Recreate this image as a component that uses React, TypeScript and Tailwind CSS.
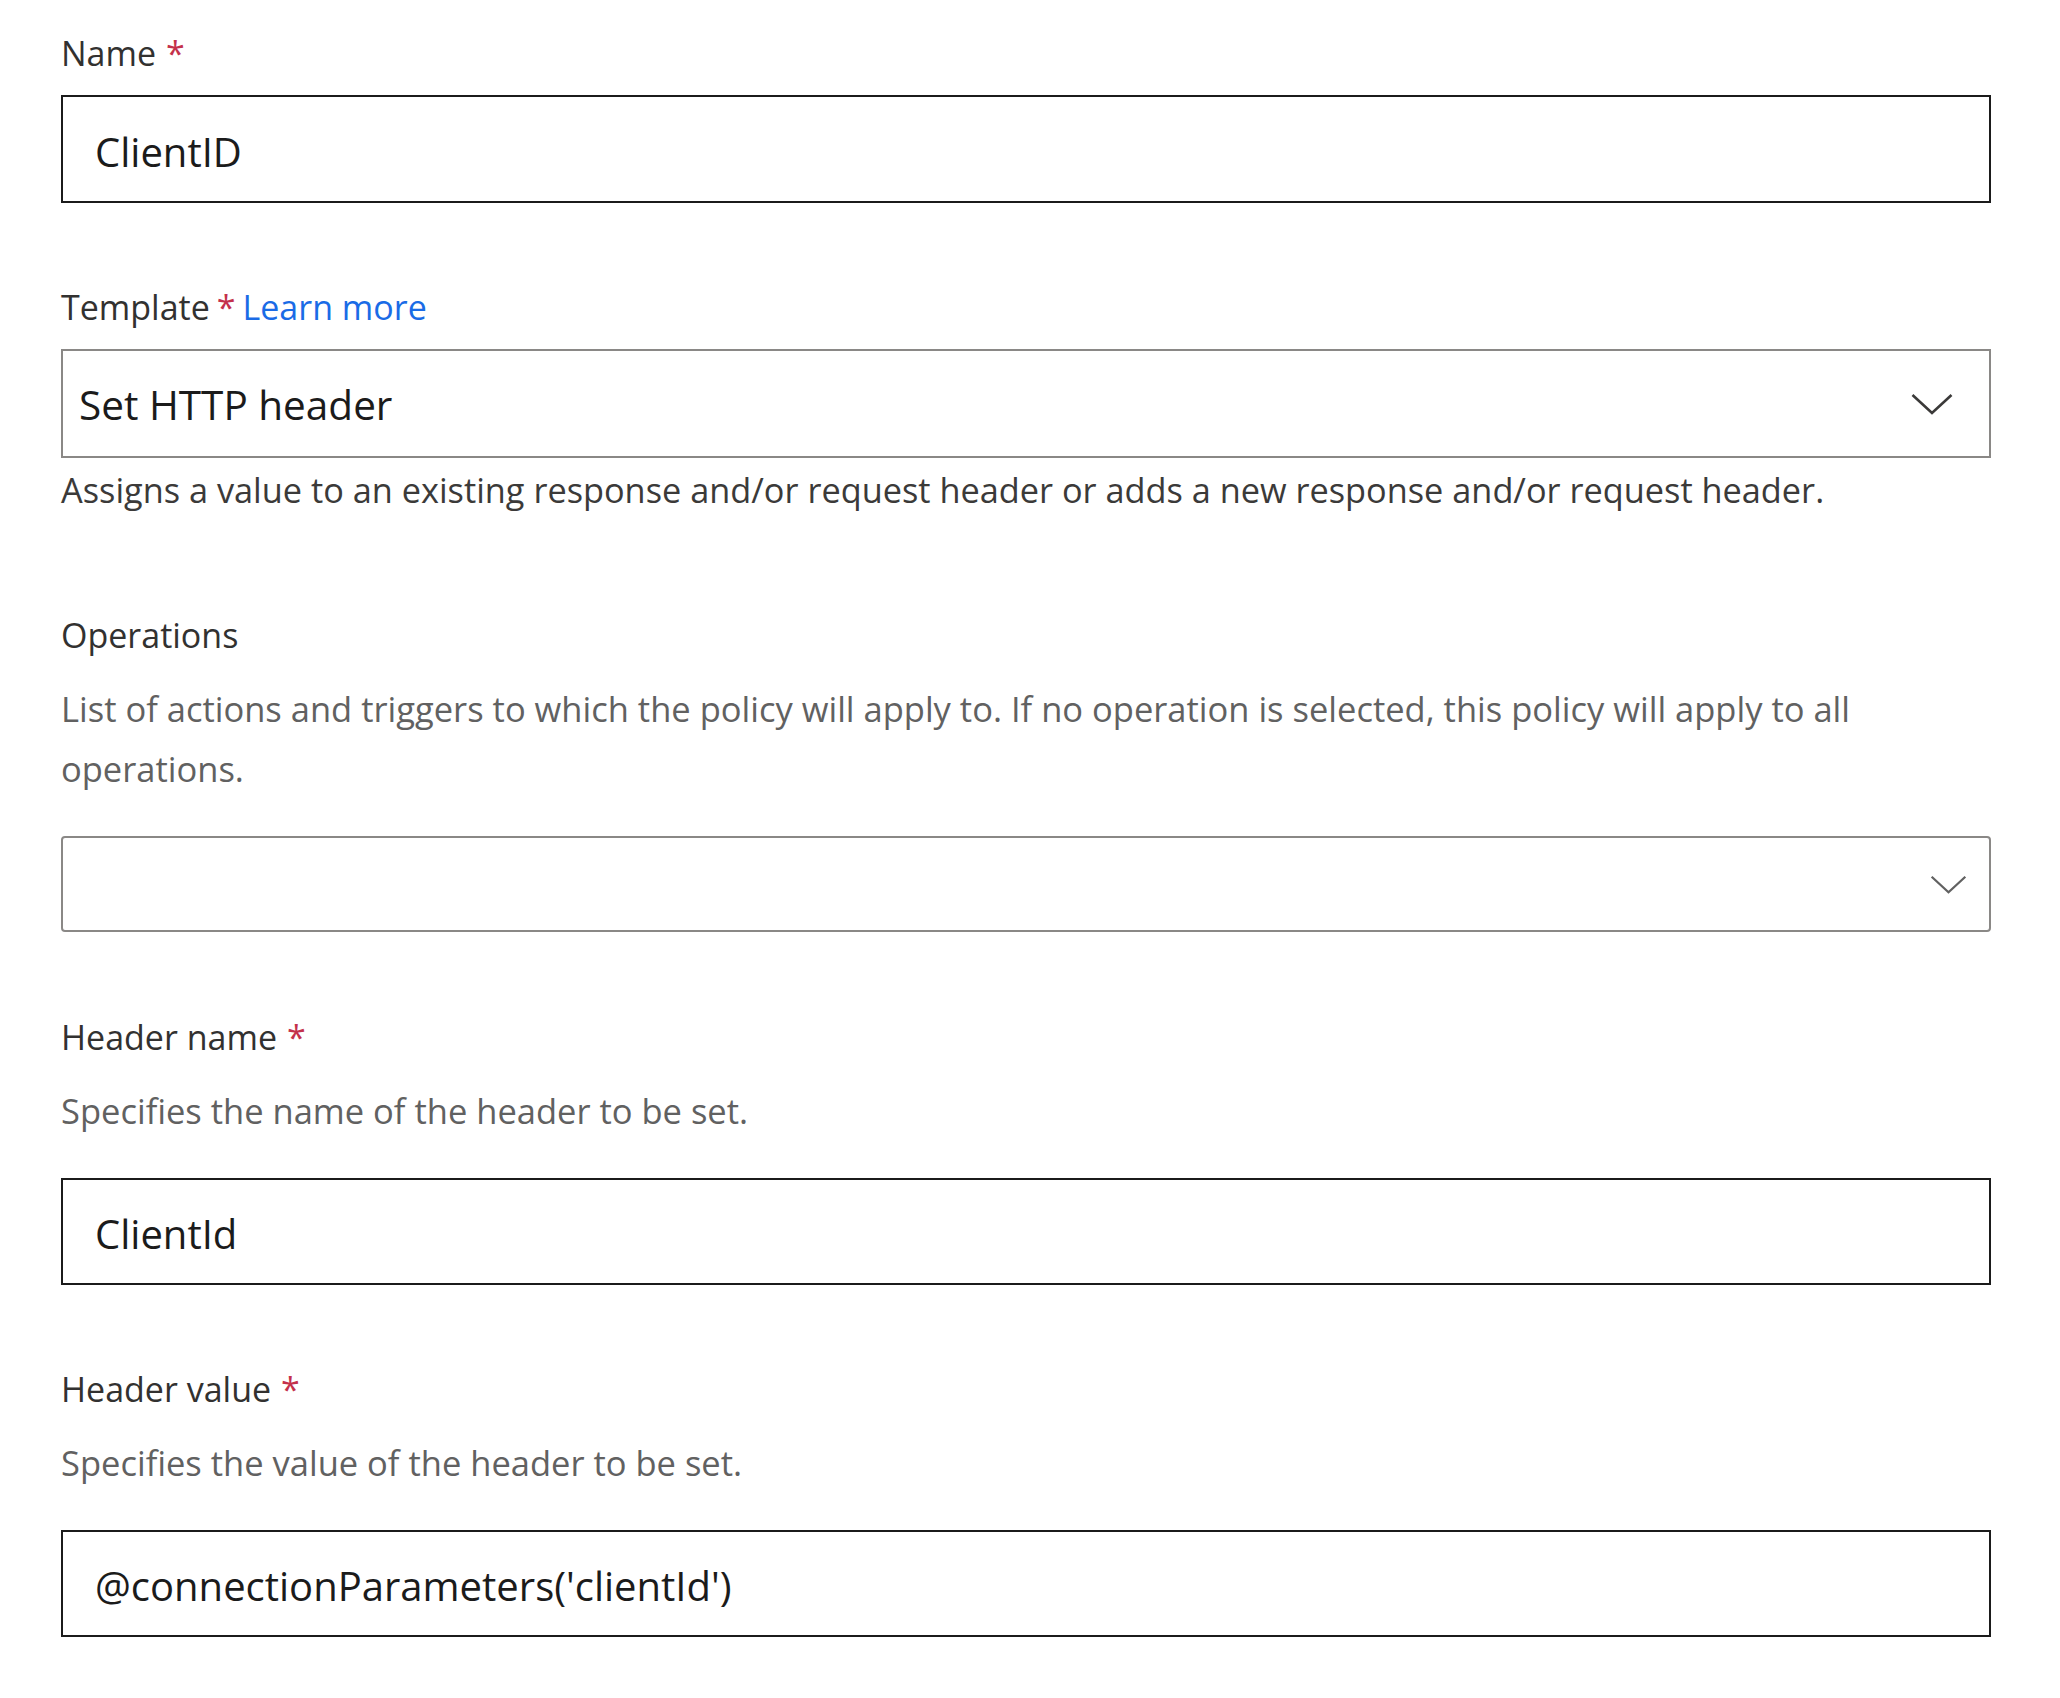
import React from 'react';

const font = { fontFamily: '"Open Sans", "Noto Sans", sans-serif' };

const Label: React.FC<{ text: string; required?: boolean; link?: string; className?: string }> = ({
  text,
  required,
  link,
  className = '',
}) => (
  <div className={`h-[48px] flex items-center text-[34px] text-[#323130] ${className}`}>
    <span>{text}</span>
    {required && <span className={`${link ? 'ml-[7px]' : 'ml-[10px]'} text-[#c4314b]`}>*</span>}
    {link && <a className="ml-[7px] text-[#1a6be6]">{link}</a>}
  </div>
);

const Chevron: React.FC<{ className?: string; color: string }> = ({ className = '', color }) => (
  <svg viewBox="0 0 42 22" className={className} fill="none" stroke={color} strokeWidth="2.6">
    <path d="M1.5 2 L21 20 L40.5 2" />
  </svg>
);

const App: React.FC = () => {
  return (
    <div className="w-[2060px] h-[1698px] bg-white pl-[61px] pr-[69px] pt-[29px]" style={font}>
      <Label text="Name" required />
      <div className="mt-[18px] h-[108px] border-2 border-[#1b1b1b] flex items-center pl-[32px] pt-[5px] text-[40px] text-[#1b1b1b]">
        ClientID
      </div>

      <Label text="Template" required link="Learn more" className="mt-[80px]" />
      <div className="mt-[18px] h-[109px] border-2 border-[#8a8886] flex items-center justify-between pl-[16px] pr-[36px] text-[40.5px] text-[#1b1b1b]">
        <span className="pt-[3px]">Set HTTP header</span>
        <Chevron className="w-[42px] h-[22px]" color="#3b3a39" />
      </div>
      <div className="mt-[8px] h-[48px] flex items-center text-[34.3px] text-[#3b3a39] whitespace-nowrap">
        Assigns a value to an existing response and/or request header or adds a new response and/or request header.
      </div>

      <Label text="Operations" className="mt-[97px]" />
      <div className="mt-[20px] text-[34.5px] leading-[60px] text-[#616161]">
        List of actions and triggers to which the policy will apply to. If no operation is selected, this policy will apply to all operations.
      </div>
      <div className="mt-[37px] h-[96px] border-2 border-[#8a8886] rounded-[4px] flex items-center justify-end pr-[22px]">
        <Chevron className="w-[37px] h-[19px]" color="#616161" />
      </div>

      <Label text="Header name" required className="mt-[81px]" />
      <div className="mt-[20px] text-[34.5px] leading-[60px] text-[#616161]">
        Specifies the name of the header to be set.
      </div>
      <div className="mt-[37px] h-[107px] border-2 border-[#1b1b1b] flex items-center pl-[32px] pt-[5px] text-[40px] text-[#1b1b1b]">
        ClientId
      </div>

      <Label text="Header value" required className="mt-[80px]" />
      <div className="mt-[20px] text-[34.5px] leading-[60px] text-[#616161]">
        Specifies the value of the header to be set.
      </div>
      <div className="mt-[37px] h-[107px] border-2 border-[#1b1b1b] flex items-center pl-[32px] pt-[5px] text-[40px] text-[#1b1b1b]">
        @connectionParameters('clientId')
      </div>
    </div>
  );
};

export default App;
